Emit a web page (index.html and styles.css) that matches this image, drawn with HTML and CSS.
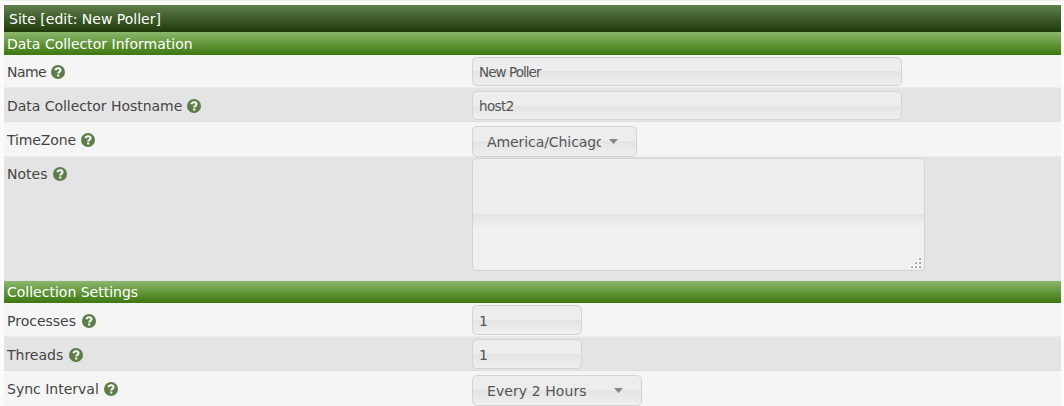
FILE: index.html
```html
<!DOCTYPE html>
<html lang="en">
<head>
<meta charset="utf-8">
<title>Site [edit: New Poller]</title>
<link rel="stylesheet" href="styles.css">
</head>
<body>
<svg width="0" height="0" class="defs">
  <symbol id="help" viewBox="0 0 14 14">
    <circle cx="7" cy="7" r="7" fill="#5c7d48"/>
    <path d="M4.4 5.3C4.8 3.9 5.7 3.2 7.1 3.2c1.4 0 2.4.8 2.4 2 0 1.6-2.3 1.6-2.3 3.3" fill="none" stroke="#f8f8f8" stroke-width="2.1"/>
    <rect x="6.1" y="9.5" width="2.2" height="2" fill="#f8f8f8"/>
  </symbol>
</svg>
<main class="form">
  <h1 class="title"><span>Site [edit: New Poller]</span></h1>
  <h2 class="section first"><span>Data Collector Information</span></h2>
  <div class="row odd name"><div class="label"><span>Name</span><svg class="help"><use href="#help"/></svg></div><div class="control text wide"><span class="poller">New Poller</span></div></div>
  <div class="row even hostname"><div class="label"><span>Data Collector Hostname</span><svg class="help"><use href="#help"/></svg></div><div class="control text wide"><span class="host">host2</span></div></div>
  <div class="row odd zone"><div class="label"><span>TimeZone</span><svg class="help"><use href="#help"/></svg></div><div class="control select tz"><span class="value">America/Chicago</span><i class="arrow"></i></div></div>
  <div class="row even notes"><div class="label"><span>Notes</span><svg class="help"><use href="#help"/></svg></div><div class="control area"><svg class="grip" viewBox="0 0 12 12" shape-rendering="crispEdges"><g fill="#fff"><path d="M8 0h3v3H8zM4 4h3v3H4zM8 4h3v3H8zM0 8h3v3H0zM4 8h3v3H4zM8 8h3v3H8z"/></g><g fill="#aaa"><path d="M9 1h2v2H9zM5 5h2v2H5zM9 5h2v2H9zM1 9h2v2H1zM5 9h2v2H5zM9 9h2v2H9z"/></g></svg></div></div>
  <h2 class="section"><span>Collection Settings</span></h2>
  <div class="row odd"><div class="label roomy"><span>Processes</span><svg class="help"><use href="#help"/></svg></div><div class="control text small"><span>1</span></div></div>
  <div class="row even"><div class="label roomy"><span>Threads</span><svg class="help"><use href="#help"/></svg></div><div class="control text small"><span>1</span></div></div>
  <div class="row odd sync"><div class="label"><span>Sync Interval</span><svg class="help"><use href="#help"/></svg></div><div class="control select hours"><span class="value">Every 2 Hours</span><i class="arrow"></i></div></div>
</main>
</body>
</html>
```
FILE: styles.css
```css
* { box-sizing: border-box; }
body {
  margin: 0;
  height: 406px;
  overflow: hidden;
  background: #fdfaf9;
  border-top: 1px solid #ececec;
  color: #444;
  font: 14px/20px "DejaVu Sans", sans-serif;
}
.defs { display: block; }
.form { width: 1057px; margin: 4px 0 0 4px; }
.title, .section { margin: 0; color: #fff; font-size: 14px; font-weight: 400; }
.title {
  height: 27px;
  padding: 4px 5px;
  background: linear-gradient(#5f7f4c, #1d3907);
}
.section {
  height: 22px;
  padding: 1px 3px;
  background: linear-gradient(#8bb66c, #3c770d);
}
.section.first { height: 23px; padding-top: 2px; }
.row {
  display: grid;
  grid-template-columns: 468px auto;
  justify-content: start;
  align-items: start;
  height: 34px;
  border-bottom: 1px solid #ececec;
}
.odd { background: #f5f5f5; }
.even { background: #e4e4e4; border-bottom-color: #dfdfdf; }
.name { height: 33px; }
.zone { height: 35px; }
.notes { height: 124px; }
.sync { height: 35px; border: 0; }
.label {
  display: flex;
  align-items: center;
  gap: 5px;
  height: 20px;
  margin: 8px 0 0 3px;
}
.name .label { margin-top: 7px; letter-spacing: -0.55px; }
.hostname .label { letter-spacing: -0.04px; }
.zone .label { letter-spacing: -0.12px; }
.notes .label { margin-top: 7px; gap: 6px; }
.roomy { gap: 6px; }
.help { width: 14px; height: 14px; }
.control {
  display: flex;
  align-items: center;
  height: 30px;
  border: 1px solid #d3d3d3;
  border-radius: 5px;
  color: #555;
  white-space: nowrap;
  background: linear-gradient(#ededed 0, #ededed 50%, #e4e4e4 50%, #efefef 100%);
}
.text { margin-top: 2px; padding: 2px 6px 0; }
.wide { width: 430px; height: 29px; margin-top: 3px; padding-top: 0; }
.name .wide { margin-top: 2px; }
.wide span { font-size: 13.5px; }
.poller { letter-spacing: -0.95px; }
.host { letter-spacing: -0.6px; }
.small { width: 110px; }
.select { height: 31px; margin-top: 4px; padding: 0 19px 0 14px; justify-content: space-between; }
.tz { width: 165px; }
.hours { width: 170px; }
.value { width: 114px; overflow: hidden; }
.tz .value { letter-spacing: -0.08px; }
.hours .value { letter-spacing: 0.08px; }
.arrow {
  width: 9px;
  height: 5px;
  margin-right: -1px;
  background: #888;
  clip-path: polygon(0 0, 100% 0, 50% 100%);
}
.area {
  width: 453px;
  height: 113px;
  margin-top: 1px;
  justify-content: flex-end;
  align-items: flex-end;
  background: linear-gradient(#eee 0, #eee 50%, #e4e4e4 50%, #f0f0f0 62%, #f0f0f0 100%);
}
.grip { width: 12px; height: 12px; margin: 0 2px 1px 0; }
```
